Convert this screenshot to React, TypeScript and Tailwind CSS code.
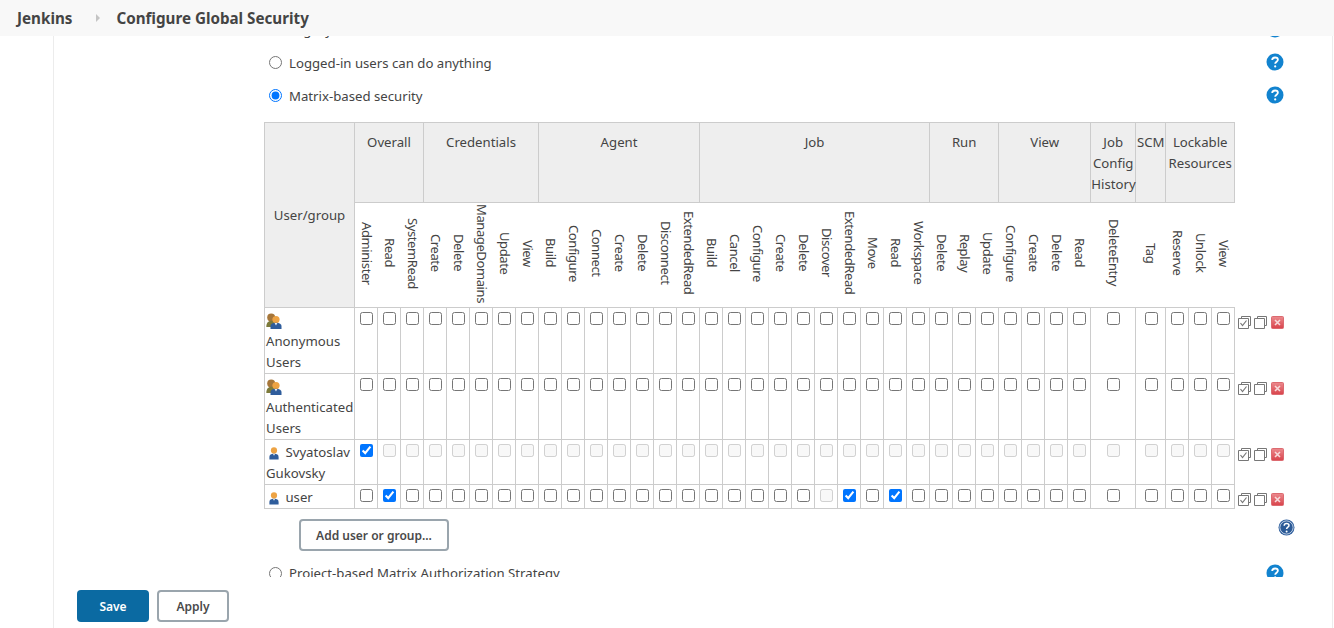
import React from "react";

type Perm = { name: string; w: number };
const groups: { title: string; lines: string[]; perms: string[]; widths?: number[] }[] = [
  { title: "Overall", lines: ["Overall"], perms: ["Administer", "Read", "SystemRead"] },
  { title: "Credentials", lines: ["Credentials"], perms: ["Create", "Delete", "ManageDomains", "Update", "View"] },
  { title: "Agent", lines: ["Agent"], perms: ["Build", "Configure", "Connect", "Create", "Delete", "Disconnect", "ExtendedRead"] },
  { title: "Job", lines: ["Job"], perms: ["Build", "Cancel", "Configure", "Create", "Delete", "Discover", "ExtendedRead", "Move", "Read", "Workspace"] },
  { title: "Run", lines: ["Run"], perms: ["Delete", "Replay", "Update"] },
  { title: "View", lines: ["View"], perms: ["Configure", "Create", "Delete", "Read"] },
  { title: "Job Config History", lines: ["Job", "Config", "History"], perms: ["DeleteEntry"], widths: [45] },
  { title: "SCM", lines: ["SCM"], perms: ["Tag"], widths: [30] },
  { title: "Lockable Resources", lines: ["Lockable", "Resources"], perms: ["Reserve", "Unlock", "View"] },
];

const perms: Perm[] = groups.flatMap((g) =>
  g.perms.map((name, i) => ({ name, w: g.widths ? g.widths[i] : 23 }))
);

type Row = {
  lines: string;
  icon: "group" | "user";
  height: string;
  state: (i: number) => "off" | "on" | "disabled";
};

const rows: Row[] = [
  { lines: "Anonymous Users", icon: "group", height: "h-[66px]", state: () => "off" },
  { lines: "Authenticated Users", icon: "group", height: "h-[66px]", state: () => "off" },
  { lines: "Svyatoslav Gukovsky", icon: "user", height: "h-[45px]", state: (i) => (i === 0 ? "on" : "disabled") },
  {
    lines: "user",
    icon: "user",
    height: "h-[24px]",
    state: (i) => (i === 20 ? "disabled" : i === 1 || i === 21 || i === 23 ? "on" : "off"),
  },
];

function Help() {
  return (
    <svg width="18" height="18" viewBox="0 0 18 18" className="mb-[2px] shrink-0">
      <circle cx="9" cy="9" r="8.5" fill="#1283cf" />
      <path d="M6.2 7.1c0-1.7 1.2-2.6 2.9-2.6s2.8.9 2.8 2.3c0 1.9-2.7 2-2.7 4" fill="none" stroke="#fff" strokeWidth="1.8" />
      <circle cx="9.2" cy="13.4" r="1.1" fill="#fff" />
    </svg>
  );
}

function DarkHelp() {
  return (
    <svg width="17" height="17" viewBox="0 0 17 17" className="shrink-0">
      <circle cx="8.5" cy="8.5" r="8" fill="#2f5f9e" />
      <circle cx="8.5" cy="8.5" r="6.6" fill="#2b5a97" stroke="#dfe7f2" strokeWidth="0.8" />
      <path d="M6.2 6.7c0-1.4 1-2.2 2.4-2.2s2.4.8 2.4 2c0 1.7-2.4 1.7-2.4 3.5" fill="none" stroke="#fff" strokeWidth="1.5" />
      <circle cx="8.6" cy="12.4" r="1" fill="#fff" />
    </svg>
  );
}

function GroupIcon() {
  return (
    <svg width="16" height="16" viewBox="0 0 16 16" className="inline-block align-[-4px]">
      <circle cx="5.2" cy="4.4" r="4" fill="#a6763a" />
      <path d="M0.3 14c0-4 2-6.2 5-6.2s4.5 1 4.5 3v3.2z" fill="#7c7a3a" />
      <circle cx="10" cy="6.6" r="3.6" fill="#eda344" />
      <path d="M4.5 16v-3c0-2 1.8-3.3 5.5-3.3s5.5 1.3 5.5 3.3v3z" fill="#2f5d9c" />
      <path d="M8.6 10l1.4 2.4 1.4-2.4z" fill="#e8eef6" />
    </svg>
  );
}

function UserIcon() {
  return (
    <svg width="16" height="16" viewBox="0 0 16 16" className="inline-block align-[-4px]">
      <circle cx="8" cy="5.4" r="3.1" fill="#eda344" />
      <path d="M3.4 14.5v-2.5c0-2 1.6-3.2 4.6-3.2s4.6 1.2 4.6 3.2v2.5z" fill="#2f5d9c" />
      <path d="M7 9l1 1.7 1-1.7z" fill="#e8eef6" />
    </svg>
  );
}

function Actions() {
  return (
    <div className="flex items-start gap-[3px] pl-[3px] pt-[8px]">
      <svg width="13" height="13" viewBox="0 0 13 13">
        <path d="M3.5 2.5V.5h9v9h-2" fill="none" stroke="#777" />
        <path d="M.5 2.5h10v10H.5z" fill="#fff" stroke="#777" />
        <path d="M2.5 7l2 2.5 4-5" fill="none" stroke="#777" strokeWidth="1.2" />
      </svg>
      <svg width="13" height="13" viewBox="0 0 13 13">
        <path d="M3.5 2.5V.5h9v9h-2" fill="none" stroke="#777" />
        <path d="M.5 2.5h10v10H.5z" fill="#fff" stroke="#777" />
      </svg>
      <svg width="13" height="13" viewBox="0 0 13 13" className="ml-[1px]">
        <defs>
          <linearGradient id="red" x1="0" y1="0" x2="0" y2="1">
            <stop offset="0" stopColor="#ec8a8e" />
            <stop offset="1" stopColor="#d8434b" />
          </linearGradient>
        </defs>
        <rect x="0.5" y="0.5" width="12" height="12" rx="1" fill="url(#red)" stroke="#dc6a70" />
        <path d="M4 4l5 5M9 4l-5 5" stroke="#f7dadb" strokeWidth="1.6" />
      </svg>
    </div>
  );
}

function RadioRow({ label, checked, extra }: { label: string; checked?: boolean; extra?: string }) {
  return (
    <div className={`flex h-[33px] items-center justify-between pl-[215px] pr-[48px] ${extra ?? ""}`}>
      <label className="flex items-center gap-[7px]">
        <input type="radio" name={label} defaultChecked={checked} className="h-[13px] w-[13px]" />
        <span className="pt-[2px]">{label}</span>
      </label>
      <Help />
    </div>
  );
}

export default function App() {
  return (
    <div className="flex h-[628px] flex-col overflow-hidden bg-white font-['Noto_Sans','Open_Sans',sans-serif] text-[13.2px] leading-[21px] text-[#444]">
      <header className="relative z-10 flex h-9 shrink-0 items-center bg-[#f8f8f8] pl-[17px] text-[15.2px] font-bold text-[#444]">
        <span>Jenkins</span>
        <svg width="6" height="8" viewBox="0 0 6 8" className="ml-[23px] mr-[15px]">
          <path d="M1 0l4 4-4 4z" fill="#c4c4c4" />
        </svg>
        <span>Configure Global Security</span>
      </header>

      <div className="ml-[53px] mr-px flex min-h-0 flex-1 flex-col border-x border-[#ececec]">
        <main className="h-[541px] shrink-0 overflow-hidden">
          <RadioRow label="Legacy mode" extra="-mt-[23px]" />
          <RadioRow label="Logged-in users can do anything" />
          <RadioRow label="Matrix-based security" checked />

          <div className="ml-[210px] mt-[10px]">
            <table className="w-[1030px] table-fixed border-collapse">
              <colgroup>
                <col className="w-[90px]" />
                {perms.map((p, i) => (
                  <col key={i} style={{ width: p.w }} />
                ))}
                <col className="w-[60px]" />
              </colgroup>
              <thead>
                <tr className="h-[80px]">
                  <th rowSpan={2} className="border border-[#ccc] bg-[#eee] p-0 text-center font-normal">
                    User/group
                  </th>
                  {groups.map((g) => (
                    <th
                      key={g.title}
                      colSpan={g.perms.length}
                      className="border border-[#ccc] bg-[#eee] px-0 pb-[7px] pt-[9px] align-top font-normal"
                    >
                      {g.lines.map((l) => (
                        <div key={l}>{l}</div>
                      ))}
                    </th>
                  ))}
                </tr>
                <tr className="h-[105px]">
                  {perms.map((p, i) => (
                    <th
                      key={i}
                      className="border border-[#ccc] border-x-transparent bg-white px-0 pb-[4px] pt-0 text-center align-middle font-normal leading-[0]"
                    >
                      <span className="inline-block whitespace-nowrap align-top text-[13px] leading-[17px] tracking-[-0.4px] [writing-mode:vertical-rl]">
                        {p.name}
                      </span>
                    </th>
                  ))}
                </tr>
              </thead>
              <tbody>
                {rows.map((r) => (
                  <tr key={r.lines} className={r.height}>
                    <td className="border border-[#ccc] px-[1px] pb-0 pt-[2px] align-top">
                      {r.icon === "group" ? <GroupIcon /> : <UserIcon />} {r.lines}
                    </td>
                    {perms.map((p, i) => {
                      const s = r.state(i);
                      return (
                        <td key={i} className={`border border-[#ccc] py-[1px] align-top ${p.name === "Tag" ? "pl-[3px] pr-[1px]" : "px-[1px]"}`}>
                          <input
                            type="checkbox"
                            readOnly
                            checked={s === "on"}
                            disabled={s === "disabled"}
                            className="mx-auto mt-[3px] block h-[13px] w-[13px]"
                          />
                        </td>
                      );
                    })}
                    <td className="p-0 align-top">
                      <Actions />
                    </td>
                  </tr>
                ))}
              </tbody>
            </table>
          </div>

          <div className="mt-[10px] flex items-start justify-between pl-[245px] pr-[37px]">
            <button className="h-[32px] w-[150px] rounded-[4px] border-2 border-[#9aa5ad] bg-white text-[12px] font-semibold text-[#4a4a4a]">
              Add user or group...
            </button>
            <DarkHelp />
          </div>
          <div className="mt-[6px] flex h-[33px] items-center justify-between pl-[215px] pr-[48px]">
            <label className="flex items-center gap-[7px]">
              <input type="radio" name="project" className="h-[13px] w-[13px]" />
              <span>Project-based Matrix Authorization Strategy</span>
            </label>
            <Help />
          </div>
        </main>

        <footer className="flex gap-2 pl-[23px] pt-[13px]">
          <button className="h-[32px] w-[72px] rounded-[4px] bg-[#0b6aa2] text-[12px] font-semibold text-white">Save</button>
          <button className="h-[32px] w-[72px] rounded-[4px] border-2 border-[#9aa5ad] bg-white text-[12px] font-semibold text-[#4a4a4a]">
            Apply
          </button>
        </footer>
      </div>
    </div>
  );
}
